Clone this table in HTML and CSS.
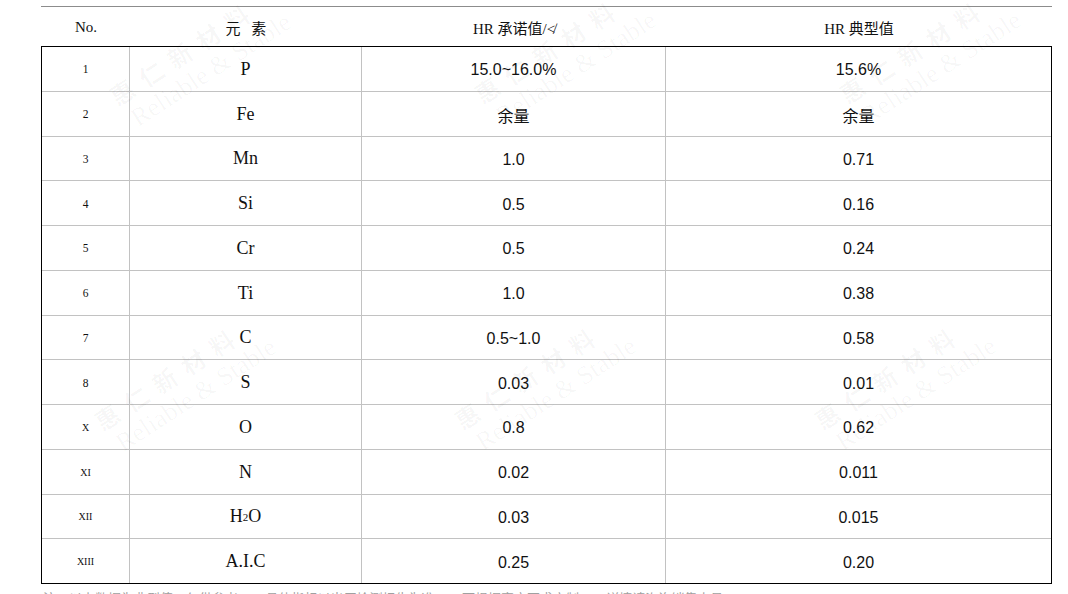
FILE: index.html
```html
<!DOCTYPE html>
<html lang="zh-CN">
<head>
<meta charset="utf-8">
<title>HR 成分表</title>
<link rel="stylesheet" href="styles.css">
</head>
<body>
<div class="page">
  <div class="head">
    <div class="hc">No.</div>
    <div class="hc wide">元 素</div>
    <div class="hc">HR 承诺值/≮</div>
    <div class="hc">HR 典型值</div>
  </div>
  <div class="grid">
    <div class="c n">1</div><div class="c el">P</div><div class="c v">15.0~16.0%</div><div class="c v">15.6%</div>
    <div class="c n">2</div><div class="c el">Fe</div><div class="c v">余量</div><div class="c v">余量</div>
    <div class="c n">3</div><div class="c el">Mn</div><div class="c v">1.0</div><div class="c v">0.71</div>
    <div class="c n">4</div><div class="c el">Si</div><div class="c v">0.5</div><div class="c v">0.16</div>
    <div class="c n">5</div><div class="c el">Cr</div><div class="c v">0.5</div><div class="c v">0.24</div>
    <div class="c n">6</div><div class="c el">Ti</div><div class="c v">1.0</div><div class="c v">0.38</div>
    <div class="c n">7</div><div class="c el">C</div><div class="c v">0.5~1.0</div><div class="c v">0.58</div>
    <div class="c n">8</div><div class="c el">S</div><div class="c v">0.03</div><div class="c v">0.01</div>
    <div class="c n roman">X</div><div class="c el">O</div><div class="c v">0.8</div><div class="c v">0.62</div>
    <div class="c n roman">XI</div><div class="c el">N</div><div class="c v">0.02</div><div class="c v">0.011</div>
    <div class="c n roman">XII</div><div class="c el">H<sub>2</sub>O</div><div class="c v">0.03</div><div class="c v">0.015</div>
    <div class="c n roman last">XIII</div><div class="c el last">A.I.C</div><div class="c v last">0.25</div><div class="c v last">0.20</div>
  </div>
  <p class="note">注：以上数据为典型值，仅供参考；&nbsp;&nbsp;&nbsp;&nbsp;具体指标以出厂检测报告为准；&nbsp;&nbsp;&nbsp;&nbsp;可根据客户要求定制；&nbsp;&nbsp;&nbsp;&nbsp;详情请咨询销售人员。</p>
</div>
<div class="marks">
  <div class="wm" style="left:104px;top:86px"><div class="cn">惠仁新材料</div><div class="en">Reliable &amp; Stable</div></div>
  <div class="wm" style="left:469px;top:84px"><div class="cn">惠仁新材料</div><div class="en">Reliable &amp; Stable</div></div>
  <div class="wm" style="left:834px;top:84px"><div class="cn">惠仁新材料</div><div class="en">Reliable &amp; Stable</div></div>
  <div class="wm" style="left:89px;top:411px"><div class="cn">惠仁新材料</div><div class="en">Reliable &amp; Stable</div></div>
  <div class="wm" style="left:449px;top:410px"><div class="cn">惠仁新材料</div><div class="en">Reliable &amp; Stable</div></div>
  <div class="wm" style="left:809px;top:410px"><div class="cn">惠仁新材料</div><div class="en">Reliable &amp; Stable</div></div>
</div>
</body>
</html>
```
FILE: styles.css
```css
html, body {
  margin: 0;
  padding: 0;
  background: #fff;
  overflow: hidden;
}
body {
  width: 1068px;
  height: 594px;
  position: relative;
  color: #111;
  font-family: "Liberation Serif", "Noto Sans CJK SC", serif;
}
.page {
  padding: 6px 0 0 41px;
  width: 1011px;
}
.head {
  border-top: 1px solid #8c8c8c;
  height: 39px;
  padding-left: 1px;
  display: grid;
  grid-template-columns: 88px 232px 304px 386px;
  align-items: center;
  font-size: 15px;
  padding-top: 1px;
  box-sizing: border-box;
  height: 40px;
}
.hc {
  text-align: center;
}
.hc.wide {
  word-spacing: 7px;
}
.grid {
  border: 1px solid #000;
  display: grid;
  grid-template-columns: 88px 232px 304px 385px;
  grid-template-rows: repeat(11, 44.75px) 43.75px;
}
.c {
  display: flex;
  align-items: center;
  justify-content: center;
  border-right: 1px solid #c2c2c2;
  border-bottom: 1px solid #c2c2c2;
}
.c:nth-child(4n) {
  border-right: none;
}
.c.last {
  border-bottom: none;
}
.n {
  font-size: 11.5px;
  padding-top: 1px;
}
.n.roman {
  font-size: 10px;
}
.el {
  font-size: 18px;
  padding-top: 1px;
}
.el sub {
  font-size: 11px;
  vertical-align: -2px;
  line-height: 0;
}
.v {
  font-family: "Liberation Sans", "Noto Sans CJK SC", sans-serif;
  font-size: 16px;
  padding-top: 3px;
}
.note {
  margin: 7px 0 0 2px;
  font-family: "Liberation Sans", "Noto Sans CJK SC", sans-serif;
  font-size: 13px;
  line-height: 16px;
  color: #a0a0a0;
  white-space: nowrap;
}
.marks {
  position: absolute;
  left: 0;
  top: 0;
  width: 1068px;
  height: 594px;
  pointer-events: none;
  overflow: hidden;
}
.wm {
  position: absolute;
  transform: rotate(-33deg);
  transform-origin: 0 0;
  color: rgba(0, 0, 0, 0.035);
  white-space: nowrap;
}
.wm .cn {
  font-family: "Noto Sans CJK SC", sans-serif;
  font-weight: 700;
  font-size: 24px;
  letter-spacing: 10px;
  line-height: 30px;
}
.wm .en {
  font-family: "Liberation Serif", serif;
  font-size: 26px;
  line-height: 30px;
  margin-left: 6px;
}
```
